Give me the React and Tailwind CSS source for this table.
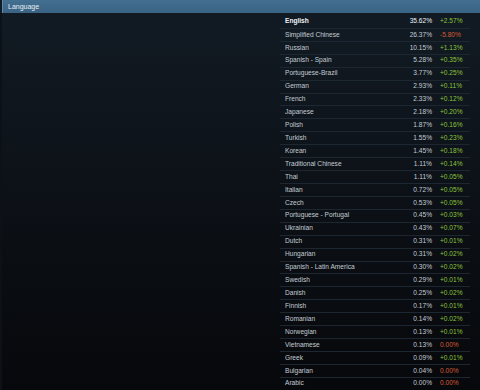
import React from "react";

const rows = [
  ["English", "35.62%", "+2.57%", true],
  ["Simplified Chinese", "26.37%", "-5.80%"],
  ["Russian", "10.15%", "+1.13%"],
  ["Spanish - Spain", "5.28%", "+0.35%"],
  ["Portuguese-Brazil", "3.77%", "+0.25%"],
  ["German", "2.93%", "+0.11%"],
  ["French", "2.33%", "+0.12%"],
  ["Japanese", "2.18%", "+0.20%"],
  ["Polish", "1.87%", "+0.16%"],
  ["Turkish", "1.55%", "+0.23%"],
  ["Korean", "1.45%", "+0.18%"],
  ["Traditional Chinese", "1.11%", "+0.14%"],
  ["Thai", "1.11%", "+0.05%"],
  ["Italian", "0.72%", "+0.05%"],
  ["Czech", "0.53%", "+0.05%"],
  ["Portuguese - Portugal", "0.45%", "+0.03%"],
  ["Ukrainian", "0.43%", "+0.07%"],
  ["Dutch", "0.31%", "+0.01%"],
  ["Hungarian", "0.31%", "+0.02%"],
  ["Spanish - Latin America", "0.30%", "+0.02%"],
  ["Swedish", "0.29%", "+0.01%"],
  ["Danish", "0.25%", "+0.02%"],
  ["Finnish", "0.17%", "+0.01%"],
  ["Romanian", "0.14%", "+0.02%"],
  ["Norwegian", "0.13%", "+0.01%"],
  ["Vietnamese", "0.13%", "0.00%"],
  ["Greek", "0.09%", "+0.01%"],
  ["Bulgarian", "0.04%", "0.00%"],
  ["Arabic", "0.00%", "0.00%"],
];

export default function App() {
  return (
    <div
      className="w-[480px] h-[390px] overflow-hidden flex flex-col bg-gradient-to-b from-[#121b24] to-[#07080b] text-[6.6px] leading-none"
      style={{ fontFamily: '"Liberation Sans", Arial, sans-serif' }}
    >
      <div className="h-[13px] ml-[2px] shrink-0 flex items-center pl-[5px] bg-gradient-to-b from-[#436f91] to-[#3a6383] border-l border-[#5d88a8] text-[#e6eef4] text-[7px]">
        Language
      </div>
      <div className="flex-1 flex justify-end pr-[10px] pt-[2px] border-l-2 border-[#0c1117]">
        <div className="w-[190px] flex flex-col">
          {rows.map(([name, pct, delta, bold], i) => {
            const neg = delta.startsWith("-") || delta === "0.00%";
            return (
              <div
                key={i}
                className={`h-[12.93px] shrink-0 flex items-center ${i === 0 ? "" : "border-t border-[#1d2731]"}`}
              >
                <div className={`flex-1 pl-[5px] ${bold ? "font-bold text-[#f0f4f7]" : "text-[#c3ccd4]"}`}>{name}</div>
                <div className={`w-[40px] text-right ${bold ? "text-[#eef2f5]" : "text-[#c3ccd4]"}`}>{pct}</div>
                <div className={`w-[30px] ml-[8px] ${neg ? "text-[#d65a36]" : "text-[#8cc43c]"}`}>{delta}</div>
              </div>
            );
          })}
        </div>
      </div>
    </div>
  );
}
